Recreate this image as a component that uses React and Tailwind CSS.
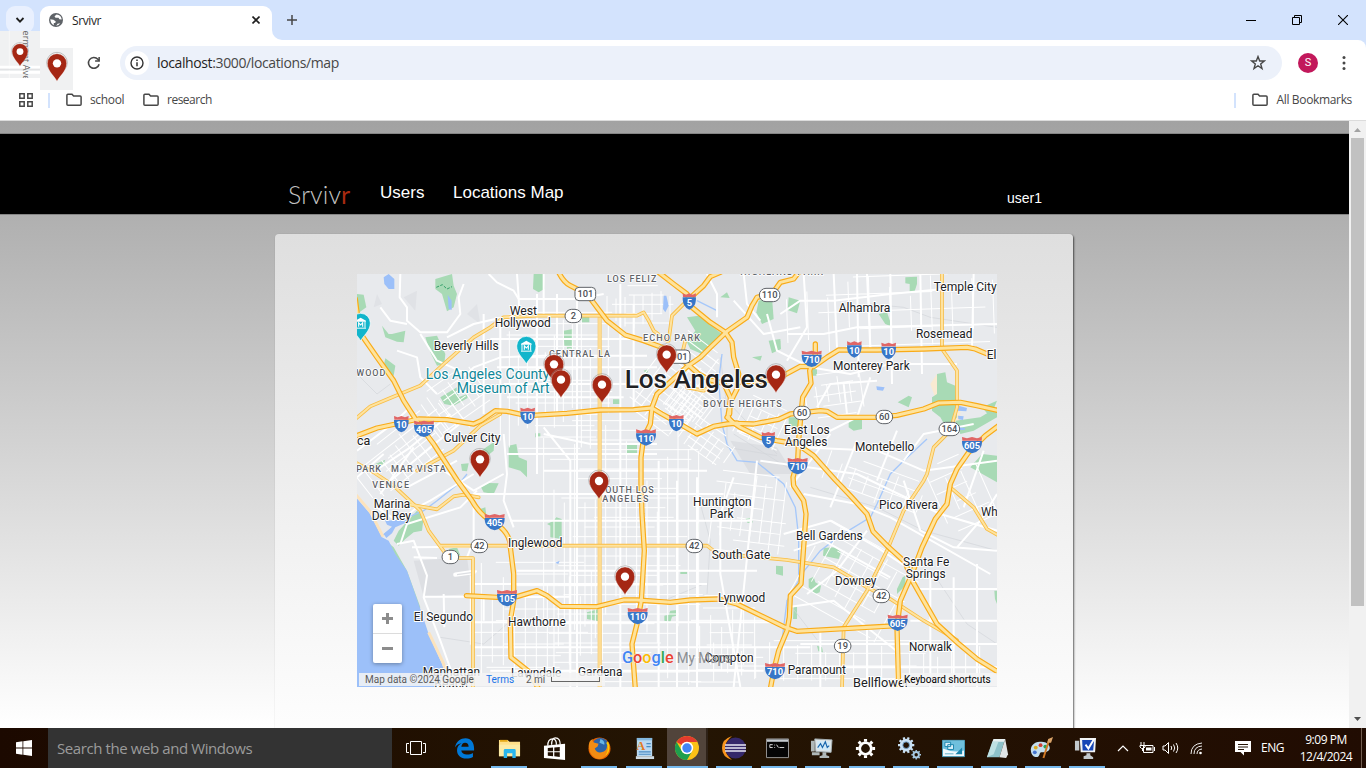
import React from "react";

/* ---------- Map data (map units: 3 per pixel) ---------- */

const HIGHWAYS = [
  "M-5 75L2 130L15 185L60 250L110 320L140 380L185 450L230 510L300 618L345 680Q370 725 410 745Q460 775 460 820L470 900L470 980L460 1040L462 1150L515 1192L545 1245",
  "M-5 487L60 462L130 447L185 435L270 437L350 450L372 440L415 410L450 412L510 425L630 418L730 408L830 407L885 402L915 420L960 445L1020 480L1070 457L1110 450L1140 447",
  "M1110 430L1130 448L1190 450L1265 436L1300 420L1390 410L1410 412L1440 430L1560 430L1620 424L1700 405L1745 387L1810 385L1860 395L1925 410",
  "M905 -5L950 30L990 60L1005 100L1060 145L1105 175L1125 205L1130 250L1145 300L1140 345L1120 385L1113 425Q1115 440 1150 460L1210 490L1260 500L1320 510L1370 545L1410 590L1435 618L1480 665L1530 720L1548 772L1590 815L1645 865L1660 910L1700 980L1740 1050L1800 1105L1860 1155L1925 1195",
  "M605 -5Q620 25 640 35L690 60L720 100L750 140L805 183L860 200L920 222L965 248L993 272L1025 300L1060 318L1100 328L1120 370L1118 420",
  "M1325 -5L1310 15L1270 25L1245 60L1200 70L1185 95L1170 130L1110 172L1060 220L1030 250L990 278L955 310L900 360L885 400L880 450L860 490L852 550L852 630L855 720L862 830L853 980L840 1050L825 1110L835 1245",
  "M1145 325L1200 322L1260 315L1330 277L1370 278L1410 250L1445 228L1560 228L1700 225L1830 220L1855 225L1895 242",
  "M1375 210L1375 240L1358 290L1362 328L1337 370L1332 420L1325 500L1322 560L1308 610L1310 635L1340 680L1347 720L1332 930L1300 965L1297 1030L1290 1070L1265 1130L1250 1190L1240 1245",
  "M1925 455L1885 485L1835 535L1800 585L1780 630L1770 690L1735 735L1695 820L1665 900L1630 980L1620 1060L1625 1245",
  "M328 965L420 970L480 968L540 950L570 965L612 997L720 998L800 978L840 978L940 985L1000 978L1085 975L1140 990L1280 1058L1320 1072L1460 1064L1620 1055",
  "M1090 -5L1060 8L1040 35L990 80",
];

const SECONDARY = [
  "M-5 435L40 397L100 372L190 335L260 270L350 190L400 160L440 130L540 125L840 125L860 115L875 140L890 170L930 200",
  "M935 200L945 125L1000 70",
  "M985 200L975 240L1000 270",
  "M180 590L290 530L370 455L430 420",
  "M-5 565L50 595L110 635L190 710L215 770L265 838L300 852L348 852L348 1245",
  "M150 690L240 706L290 667L320 662L365 670",
  "M250 815L1050 815L1080 838L1290 858L1430 880L1490 915L1530 940L1600 975L1700 1040L1800 1098",
  "M1755 -5L1755 225L1800 290L1800 400L1780 470L1730 520L1710 600L1700 620L1640 710L1590 830L1530 950L1460 1060L1455 1245",
  "M1780 640L1850 700L1890 765L1925 785",
  "M990 340L1040 350L1080 320",
];

const WIDE_STREETS = ["M728 130L728 1245"];

const MAIN_STREETS = [
  "M130 0L128 70L150 100L150 140L190 175L270 175L310 120L305 70L320 30",
  "M70 100L100 140L150 150M190 180L240 260L330 300L350 280L430 250L560 245L700 245L870 245",
  "M120 230L180 250L190 310L240 360M270 190L350 150L480 120M480 0L485 70L487 130",
  "M395 0L420 25L470 50L485 75L660 75L740 60M380 120L380 420M430 130L430 410M540 60L540 600",
  "M560 0L560 120M600 60L600 420M660 70L660 1239M790 30L790 1239M830 90L830 400",
  "M420 280L900 280M440 330L860 330M450 370L800 370M400 195L900 195",
  "M440 480L450 600L440 680L470 760M450 540L900 540M560 480L700 510L900 510M560 460L640 560L640 1239",
  "M560 590L1050 590M350 660L1100 660M460 740L1180 740M480 890L1200 890M350 930L1050 930M350 1045L1260 1045M350 1120L1360 1120M400 1190L1220 1190",
  "M905 560L905 1239M960 620L960 1239M1020 610L1020 1239M1130 610L1090 720L1090 900L1150 1239M1200 560L1130 1239",
  "M120 810L170 800L210 905L200 970L250 1100L300 1239M165 820L360 818M170 850L240 852M200 968L640 968",
  "M295 902L360 892M260 960L262 1060M330 850L350 800L350 660M380 960L380 1040",
  "M120 750L180 700L220 680L350 600M130 810L150 750L310 700L360 650M60 700L120 740M70 660L170 520",
  "M0 530L100 455L160 400M40 600L160 520L280 420M0 610L80 540M100 620L220 520L320 440M150 640L300 560M230 570L350 650L440 600",
  "M1050 0L1080 60L1080 130M1230 120L1260 230L1340 270M1130 80L1220 180L1330 160M1160 0L1170 90L1210 140",
  "M1270 120L1330 80L1430 80L1600 60L1920 30M1290 180L1400 180L1500 160L1920 150M1340 0L1350 160L1290 260",
  "M1430 0L1440 220M1530 0L1540 225M1600 0L1605 330M1690 0L1695 300M1850 0L1845 220M1500 0L1505 310",
  "M1360 280L1480 300L1600 270L1800 270M1380 400L1420 330L1560 320M1460 330L1470 420M1540 310L1500 430L1400 480",
  "M1140 470L1330 520L1560 530L1700 590L1920 560M1210 560L1500 600L1750 720L1920 770M1340 660L1500 690L1600 730L1900 900",
  "M1280 780L1420 740L1560 820L1680 900M1310 830L1400 800L1600 910M1350 960L1440 890L1530 770M1290 1000L1430 980L1630 1140",
  "M1640 620L1690 770L1790 820L1920 830M1800 820L1870 740L1920 660M1720 900L1720 1239M1790 910L1790 1239M1860 870L1860 1239",
  "M1660 1040L1920 1040M1680 945L1920 945M1330 1110L1920 1110M1340 1180L1920 1180M1390 1070L1390 1239M1530 1060L1530 1239",
  "M1420 480L1300 640M1500 500L1420 700M1620 470L1560 620M1640 560L1700 480L1850 450M1880 530L1820 700",
];

const RAILS = [
  "M0 300L60 360L100 330M1090 250L1110 400L1110 520L1260 545M1100 370L1260 540M1130 480L1290 580",
  "M1540 90L1640 100L1720 130L1920 160M1030 690L1060 800L1050 960M920 980L1040 930",
  "M1360 640L1560 700L1700 770L1920 830M1730 900L1830 1050L1920 1110M1290 980L1390 1110M250 1090L380 1110L450 1050",
];

/* Street patches: centre x, centre y, width, height, angle, step x, step y */
const PATCHES = [
  [800, 840, 480, 800, 0, 31, 29],
  [600, 330, 340, 430, 0, 27, 34],
  [540, 1050, 400, 370, 0, 33, 35],
  [170, 520, 380, 150, -38, 30, 27],
  [300, 380, 190, 150, -35, 26, 26],
  [955, 335, 190, 310, 37, 25, 24],
  [1000, 400, 130, 130, 37, 12, 14],
  [1040, 500, 190, 100, 35, 26, 22],
  [850, 100, 200, 130, 0, 27, 28],
  [1600, 120, 620, 230, -2, 62, 52],
  [1220, 450, 150, 130, 25, 26, 30],
  [1440, 360, 190, 130, -8, 34, 32],
  [1180, 730, 230, 260, 7, 30, 34],
  [1500, 930, 330, 260, 29, 42, 36],
  [1560, 640, 330, 120, 20, 43, 31],
  [1480, 1170, 820, 140, 0, 42, 38],
  [1110, 1100, 230, 270, 0, 33, 37],
  [1820, 660, 160, 230, -24, 50, 42],
];

const PARKS = [
  "M235 15L285 0L290 35L300 60L290 100L270 112L255 60L235 45Z",
  "M530 0L560 0L562 45L545 55L528 45Z",
  "M0 60L20 62L28 100L0 120Z",
  "M75 155L95 180L105 180L145 170L140 205L120 203L85 190Z",
  "M205 190L240 185L265 240L262 270L240 275L220 235Z",
  "M85 253L115 275L110 305L78 285Z",
  "M250 370L300 340L305 370L330 360L332 372L290 395L262 390Z",
  "M455 515L478 510L485 550L510 560L510 610L490 590L455 580Z",
  "M312 570L335 568L330 592L315 590Z M350 545L412 503L410 530L360 570Z",
  "M620 170L648 165L645 225L622 215Z M630 190L647 195L645 220L630 225Z",
  "M990 130L1025 125L1095 180L1080 210L1060 215L1035 240L1000 225L990 205L1015 170Z",
  "M1205 80L1245 70L1250 135L1215 150L1198 115Z",
  "M1090 70L1110 55L1118 72Z M1235 200L1270 195L1272 225L1245 238Z M1185 250L1215 245L1210 260Z",
  "M1295 70L1330 80L1320 118L1292 108Z M1645 10L1680 8L1680 30L1672 55L1658 55L1658 30L1645 28Z",
  "M1565 120L1590 115L1605 158L1585 150Z M1260 205L1270 200L1268 225L1260 230Z",
  "M1363 280L1380 280L1380 305L1363 305Z M1475 435L1515 435L1515 465L1490 470L1475 460Z",
  "M1622 385L1655 365L1665 370L1655 400Z M1295 430L1330 430L1325 465L1295 455Z",
  "M1740 300L1765 295L1770 325L1795 335L1800 430L1770 465L1750 430L1725 410L1725 370L1740 360Z",
  "M1795 440L1870 430L1920 400L1920 430L1850 470L1810 480Z M1875 540L1920 545L1920 625L1840 580Z M1875 400L1920 380L1900 430Z",
  "M808 512L840 510L840 543L808 543Z M768 376L790 376L790 390L768 390Z M672 130L697 128L697 145L672 145Z",
  "M590 740L598 730L614 735L614 795L580 790L580 755L570 750Z M372 640L395 627L425 628L410 660L380 655Z",
  "M110 800L125 770L180 710L200 730L195 770L170 775L145 795L125 815Z M370 705L385 700L388 725L375 722Z M275 825L300 820L310 845L285 838Z",
  "M92 805L110 820L150 890L190 1000L183 1010L140 890L110 835Z",
  "M690 1015L725 1005L725 1042L690 1035Z M922 1025L935 1022L940 1010L960 1008L958 1025L945 1028L940 1044L922 1040Z",
  "M1017 750L1025 748L1025 775L1017 775Z M1165 733L1180 732L1188 745L1172 747Z M970 893L990 893L990 900L970 900Z",
  "M1257 875L1278 877L1278 905L1257 900Z M1400 822L1435 820L1452 835L1445 855L1420 850L1398 845Z",
  "M1355 915L1370 908L1375 925L1392 935L1388 955L1375 960L1355 940Z M1637 910L1645 905L1645 935L1620 960L1620 945Z",
  "M1310 997L1320 995L1320 1035L1308 1035Z M1380 1115L1395 1120L1398 1135L1384 1132Z M1912 950L1920 950L1920 990L1914 975Z",
  "M535 478L550 478L550 490L535 490Z M55 570L85 557L80 570L60 580Z M860 290L875 285L870 300Z",
];

const SHORE = "M-5 668L40 720L75 790L95 800L115 840L150 890L185 990L215 1080L255 1170L280 1245L-5 1245Z";

const WATER = [
  SHORE,
  "M80 10L95 0L112 15L112 45L95 45L82 30Z M272 62L284 80L284 108L275 105Z",
  "M920 65L928 65L935 95L925 115L918 105Z M1558 337L1583 340L1578 350L1560 348Z",
  "M1805 395L1830 402L1828 412L1802 410Z M1803 425L1820 427L1818 438L1804 436Z M1802 460L1825 462L1822 468L1806 468Z",
  "M75 720L90 718L92 740L118 738L118 710L128 712L128 735L150 732L150 745L115 760L105 778L88 792L80 780L105 758L90 752Z",
  "M595 866L608 860L604 870Z",
];

const RIVERS = [
  "M70 790L140 735L200 710L240 680L310 625L330 600",
  "M1020 80L1080 110M1095 240L1085 320L1095 450L1110 510L1140 560L1200 565L1280 630L1315 700L1325 790L1325 920L1290 980L1275 1100L1240 1200",
  "M1710 495L1640 560L1600 600L1560 690L1540 730L1450 785L1390 830L1330 905",
];

const LABELS = [
  ["West", 460, 540, 123], ["Hollywood", 415, 581, 159], ["Beverly Hills", 232, 425, 229],
  ["Culver City", 262, 430, 504], ["ca", 2, 40, 514], ["Marina", 52, 160, 702], ["Del Rey", 46, 162, 738],
  ["Inglewood", 455, 616, 820], ["El Segundo", 172, 348, 1041], ["Hawthorne", 455, 626, 1056],
  ["Manhattan", 199, 369, 1205], ["Beach", 234, 333, 1241], ["Lawndale", 464, 613, 1208],
  ["Huntington", 1010, 1184, 697], ["Park", 1060, 1130, 733], ["South Gate", 1066, 1240, 855],
  ["Lynwood", 1085, 1225, 984], ["Compton", 1045, 1190, 1164], ["Gardena", 665, 796, 1206],
  ["Temple City", 1732, 1919, 51], ["Alhambra", 1447, 1600, 114], ["Rosemead", 1679, 1846, 191],
  ["El", 1891, 1918, 255], ["Monterey Park", 1430, 1658, 287], ["East Los", 1283, 1418, 480],
  ["Angeles", 1286, 1411, 516], ["Montebello", 1496, 1672, 530], ["Pico Rivera", 1568, 1743, 705],
  ["Wh", 1874, 1922, 726], ["Bell Gardens", 1319, 1517, 799], ["Santa Fe", 1640, 1777, 876],
  ["Springs", 1648, 1766, 912], ["Downey", 1436, 1558, 934], ["Norwalk", 1658, 1785, 1132],
  ["Paramount", 1294, 1467, 1201], ["Bellflower", 1490, 1656, 1239],
];

const AREA_LABELS = [
  ["WOOD", 0, 83, 305], ["PARK", 0, 70, 594], ["MAR VISTA", 104, 264, 594], ["VENICE", 48, 154, 643],
  ["LOS FELIZ", 752, 896, 24], ["ECHO PARK", 860, 1027, 200], ["CENTRAL LA", 578, 757, 248],
  ["BOYLE HEIGHTS", 1040, 1272, 398], ["HIGHLAND PARK", 1152, 1396, 4],
  ["SOUTH LOS", 728, 888, 656], ["ANGELES", 738, 872, 684],
];

const ROUTES = [
  ["101", 685, 60], ["2", 649, 126], ["110", 1238, 63], ["101", 968, 248], ["60", 1335, 417], ["60", 1582, 429],
  ["164", 1777, 465], ["42", 367, 816], ["1", 280, 849], ["42", 1012, 816], ["42", 1573, 966], ["19", 1457, 1116],
];

const INTERSTATES = [
  ["10", 133, 450], ["405", 201, 464], ["10", 512, 425], ["5", 997, 82], ["10", 958, 447], ["110", 867, 490],
  ["5", 1234, 498], ["10", 1492, 226], ["10", 1595, 230], ["710", 1364, 254], ["710", 1322, 576],
  ["605", 1845, 513], ["405", 413, 744], ["105", 450, 972], ["110", 842, 1026], ["710", 1254, 1191], ["605", 1622, 1046],
];

const PINS = [[591, 325], [612, 371], [735, 386], [929, 296], [1257, 356], [369, 610], [726, 675], [804, 962]];

const PIN_PATH = "M0 0C-6 -14 -29 -30 -29 -54A29 29 0 0 1 29 -54C29 -30 6 -14 0 0Z";

function patchPath([, , w, h, , sx, sy], seed) {
  let s = seed * 7919 + 13;
  const rnd = () => {
    s = (s * 16807) % 2147483647;
    return s / 2147483647;
  };
  let d = "";
  for (let x = -w / 2; x <= w / 2; x += sx) {
    const a = rnd() * h * 0.35;
    const b = rnd() * h * 0.35;
    d += `M${x} ${-h / 2 + a}L${x} ${h / 2 - b}`;
  }
  for (let y = -h / 2; y <= h / 2; y += sy) {
    const a = rnd() * w * 0.35;
    const b = rnd() * w * 0.35;
    d += `M${-w / 2 + a} ${y}L${w / 2 - b} ${y}`;
  }
  return d;
}

function Pin({ x, y, scale = 1 }) {
  return (
    <g transform={`translate(${x} ${y}) scale(${scale})`}>
      <circle cy="-56" r="31" fill="none" stroke="#8a8a8a" strokeWidth="1.5" />
      <path d={PIN_PATH} fill="#a52714" stroke="#fff" strokeWidth="1" />
      <circle cy="-54" r="12.5" fill="#fff" />
    </g>
  );
}

function MuseumPin({ x, y }) {
  return (
    <g transform={`translate(${x} ${y})`}>
      <path d={PIN_PATH} fill="#12b5cb" stroke="#fff" strokeWidth="2" />
      <path d="M-16 -61L0 -70L16 -61V-58H-16Z" fill="#fff" />
      <path d="M-13 -58V-40M13 -58V-40M-16 -38.5H16" stroke="#fff" strokeWidth="3" />
      <path d="M-6 -43V-55L0 -48L6 -55V-43" fill="none" stroke="#fff" strokeWidth="3.4" />
    </g>
  );
}

function Interstate({ label, x, y }) {
  const w = label.length > 2 ? 30 : label.length > 1 ? 22 : 20;
  return (
    <g transform={`translate(${x} ${y})`}>
      <path
        d={`M${-w} -12H${w}Q${w} 5 ${w * 0.76} 12Q${w * 0.5} 22 0 25Q${-w * 0.5} 22 ${-w * 0.76} 12Q${-w} 5 ${-w} -12Z`}
        fill="#3776c8"
      />
      <path d={`M${-w + 1} -13L${-w} -24L${-w * 0.5} -20L0 -24L${w * 0.5} -20L${w} -24L${w - 1} -13Z`} fill="#e06666" />
      <text y="13" textAnchor="middle" fontSize="28" fontWeight="700" fill="#fff">{label}</text>
    </g>
  );
}

function Route({ label, x, y }) {
  const w = label.length > 2 ? 31 : 25;
  return (
    <g transform={`translate(${x} ${y})`}>
      <rect x={-w} y="-20" width={w * 2} height="40" rx={label === "101" ? 12 : 20} fill="#fff" stroke="#5f6368" strokeWidth="3" />
      <text y="10" textAnchor="middle" fontSize="28" fontWeight="500" fill="#4d5156">{label}</text>
    </g>
  );
}

function MapDrawing() {
  return (
    <svg viewBox="0 0 1920 1239" className="block h-[413px] w-[640px] font-[Roboto,sans-serif]">
      <rect width="1920" height="1239" fill="#e8eaed" />
      <path d="M170 860L330 850L345 960L200 968ZM1120 500L1260 520L1310 600L1180 600Z" fill="#dddfe3" />
      <path d="M140 70L180 50L175 110ZM330 120L360 90L370 150ZM60 60L75 90L50 100Z" fill="#e0e2e6" />
      <path d="M1720 330L1740 300L1810 370L1810 440L1770 470ZM1630 960L1610 1020L1645 1010Z" fill="#f9ead2" />
      {PARKS.map((d, i) => <path key={i} d={d} fill="#a8dab5" />)}
      <path d="M238 40L256 32L270 45L285 38" fill="none" stroke="#34a06a" strokeWidth="3" strokeDasharray="9 4" />
      <g fill="none" stroke="#d2d5d9" strokeWidth="2">
        {RAILS.map((d, i) => <path key={i} d={d} />)}
      </g>
      <g fill="none" stroke="#a6c8fa" strokeWidth="4">
        {RIVERS.map((d, i) => <path key={i} d={d} />)}
      </g>
      <g fill="none" stroke="#fff" strokeWidth="3">
        {PATCHES.map((p, i) => (
          <path key={i} d={patchPath(p, i + 3)} transform={`translate(${p[0]} ${p[1]}) rotate(${p[4]})`} />
        ))}
      </g>
      <g fill="none" stroke="#fff" strokeWidth="6" strokeLinejoin="round">
        {MAIN_STREETS.map((d, i) => <path key={i} d={d} />)}
      </g>
      <path d="M295 902L350 894" stroke="#fff" strokeWidth="13" strokeLinecap="round" />
      <path d="M300 902L342 896" stroke="#dddfe3" strokeWidth="4" />
      {WATER.map((d, i) => <path key={i} d={d} fill="#9cc0f9" />)}
      <path d="M-5 660L40 713L78 788M215 1075L258 1165L285 1245" fill="none" stroke="#fce3bd" strokeWidth="9" />
      <g fill="none" stroke="#f6c767" strokeWidth="12">
        {WIDE_STREETS.map((d, i) => <path key={i} d={d} />)}
      </g>
      <g fill="none" stroke="#fddc92" strokeWidth="9">
        {WIDE_STREETS.map((d, i) => <path key={i} d={d} />)}
      </g>
      <g fill="none" strokeLinejoin="round" strokeLinecap="round">
        {SECONDARY.map((d, i) => <path key={i} d={d} stroke="#f8bd45" strokeWidth="11" />)}
        {SECONDARY.map((d, i) => <path key={i} d={d} stroke="#fee3a0" strokeWidth="6" />)}
        {HIGHWAYS.map((d, i) => <path key={i} d={d} stroke="#f9ab18" strokeWidth="16" />)}
        {HIGHWAYS.map((d, i) => <path key={i} d={d} stroke="#fee39c" strokeWidth="9" />)}
      </g>
      {INTERSTATES.map(([t, x, y]) => <Interstate key={`${x}-${y}`} label={t} x={x} y={y} />)}
      {ROUTES.map(([t, x, y]) => <Route key={`${x}-${y}`} label={t} x={x} y={y} />)}
      <g fontSize="37" fill="#202124" stroke="#fff" strokeWidth="6" strokeLinejoin="round" paintOrder="stroke">
        {LABELS.map(([t, x0, x1, y]) => (
          <text key={t + x0} x={x0 - 2} y={y} textLength={x1 - x0 + 2} lengthAdjust="spacingAndGlyphs">{t}</text>
        ))}
      </g>
      <g fontSize="27" fontWeight="500" fill="#5f6368" stroke="#fff" strokeWidth="5" strokeLinejoin="round" paintOrder="stroke">
        {AREA_LABELS.map(([t, x0, x1, y]) => (
          <text key={t + x0} x={x0 - 2} y={y} textLength={x1 - x0 + 4}>{t}</text>
        ))}
      </g>
      <g fontSize="42" fill="#108798" stroke="#fff" strokeWidth="6" strokeLinejoin="round" paintOrder="stroke">
        <text x="206" y="316" textLength="371" lengthAdjust="spacingAndGlyphs">Los Angeles County</text>
        <text x="299" y="358" textLength="279" lengthAdjust="spacingAndGlyphs">Museum of Art</text>
      </g>
      <text x="803" y="341" textLength="430" lengthAdjust="spacingAndGlyphs" fontSize="79" fontWeight="500" fill="#202124" stroke="#fff" strokeWidth="6" paintOrder="stroke">Los Angeles</text>
      <MuseumPin x={508} y={270} />
      <MuseumPin x={11} y={201} />
      {PINS.map(([x, y]) => <Pin key={x} x={x} y={y} />)}
      <g fontSize="47" fontWeight="500" stroke="#fff" strokeWidth="2" paintOrder="stroke">
        <text x="795" y="1167" textLength="155" lengthAdjust="spacingAndGlyphs">
          <tspan fill="#4285f4">G</tspan><tspan fill="#ea4335">o</tspan><tspan fill="#fbbc05">o</tspan>
          <tspan fill="#4285f4">g</tspan><tspan fill="#34a853">l</tspan><tspan fill="#ea4335">e</tspan>
        </text>
        <text x="959" y="1167" textLength="166" lengthAdjust="spacingAndGlyphs" fontSize="44" fontWeight="400" fill="#8b8e92" stroke="none">My Maps</text>
      </g>
    </svg>
  );
}

function MapView() {
  return (
    <div className="relative h-[413px] w-[640px] overflow-hidden font-[Roboto,sans-serif]">
      <MapDrawing />
      <div className="absolute left-4 top-[330px] flex h-[59px] w-[29px] flex-col items-center rounded-[2px] bg-white shadow-[0_1px_4px_rgba(0,0,0,.35)]">
        <svg viewBox="0 0 29 59" className="h-[59px] w-[29px]">
          <path d="M9 14.5H20M14.5 9V20M9 44.5H20" stroke="#8c8c8c" strokeWidth="3" />
          <path d="M0 29.5H29" stroke="#dcdcdc" />
        </svg>
      </div>
      <div className="absolute left-[2px] top-[399px] flex h-[13px] w-[246px] items-center bg-[#f5f5f5]/85 pl-[6px] text-[10px] leading-[13px] text-[#5b5b5b]">
        <span className="w-[121px] whitespace-nowrap">Map data ©2024 Google</span>
        <span className="w-[40px] text-[#1a73e8]">Terms</span>
        <span className="w-[25px]">2 mi</span>
        <span className="h-[5px] w-[49px] border-x border-b border-[#666]" />
      </div>
      <div className="absolute right-0 top-[399px] flex h-[13px] w-[95px] items-center bg-[#f5f5f5]/80 pl-[2px] text-[10px] leading-[13px] text-black">
        <span className="whitespace-nowrap">Keyboard shortcuts</span>
      </div>
    </div>
  );
}

/* ---------- Browser chrome ---------- */

function Folder() {
  return (
    <svg viewBox="0 0 16 14" className="h-[14px] w-4">
      <path d="M.9 2.2Q.9 1.2 1.9 1.2H6L7.6 3H14.1Q15.1 3 15.1 4V11.3Q15.1 12.3 14.1 12.3H1.9Q.9 12.3 .9 11.3Z" fill="none" stroke="#474747" strokeWidth="1.5" />
    </svg>
  );
}

function TabStrip() {
  return (
    <div className="flex h-10 items-start bg-[#d3e3fd]">
      <div className="ml-[6px] mt-[6px] flex h-[27px] w-7 items-center justify-center rounded-[9px] bg-[#e9f0fe]">
        <svg viewBox="0 0 10 10" className="h-[10px] w-[10px]"><path d="M1.5 3L5 6.6L8.5 3" fill="none" stroke="#1f1f1f" strokeWidth="1.8" /></svg>
      </div>
      <div className="ml-[6px] mt-[6px] flex h-[34px] w-[232px] items-center rounded-t-[9px] bg-white pb-[6px] pl-[9px] pr-3">
        <svg viewBox="0 0 14 14" className="h-[14px] w-[14px]">
          <circle cx="7" cy="7" r="7" fill="#5f6368" />
          <path d="M7.6 1.4L5.5 3.2L6.5 4.7H9.5L10.4 6.2L12.7 6.6Q12.5 3.2 9.6 1.9ZM1.3 6.2L4.5 6.8L6.8 8.4L6.2 10H4.8V12.2Q1.6 10.8 1.3 6.2ZM7.2 12.7L8.6 10.7L11.2 10.2Q9.8 12.5 7.2 12.7Z" fill="#fff" />
        </svg>
        <span className="ml-[9px] flex-1 pt-px text-[12px] tracking-[-0.4px] text-[#1f1f1f]">Srvivr</span>
        <svg viewBox="0 0 8 8" className="h-2 w-2"><path d="M.5 .5L7.5 7.5M7.5 .5L.5 7.5" stroke="#1f1f1f" strokeWidth="1.6" /></svg>
      </div>
      <div className="h-10 w-[10px] bg-white"><div className="h-10 w-[10px] rounded-bl-[10px] bg-[#d3e3fd]" /></div>
      <svg viewBox="0 0 10 10" className="ml-[5px] mt-[15px] h-[10px] w-[10px]"><path d="M5 0V10M0 5H10" stroke="#474747" strokeWidth="1.5" /></svg>
      <div className="ml-auto mr-[18px] mt-[15px] flex gap-[36px]">
        <svg viewBox="0 0 10 10" className="h-[10px] w-[10px]"><path d="M0 5.5H10" stroke="#000" /></svg>
        <svg viewBox="0 0 10 10" className="h-[10px] w-[10px]"><path d="M.5 2.5H7.5V9.5H.5ZM2.5 2.5V.5H9.5V7.5H7.5" fill="none" stroke="#000" /></svg>
        <svg viewBox="0 0 10 10" className="h-[10px] w-[10px]"><path d="M0 0L10 10M10 0L0 10" stroke="#000" strokeWidth="1.1" /></svg>
      </div>
    </div>
  );
}

function AddressBar() {
  return (
    <div className="bg-[#d3e3fd]">
      <div className="flex h-[46px] items-center rounded-tr-[8px] bg-white pl-[87px]">
        <svg viewBox="0 0 14 14" className="h-[14px] w-[14px]">
          <path d="M12.1 8.2A5.4 5.4 0 1 1 10.9 3.3L12 4.5" fill="none" stroke="#474747" strokeWidth="1.6" />
          <path d="M12.9 .9V5.7H8.1V4.2H11.4V.9Z" fill="#474747" />
        </svg>
        <div className="ml-[19px] flex h-[34px] w-[1162px] items-center rounded-full bg-[#ecf1fa] pl-[5px] pr-[16px]">
          <div className="flex h-6 w-6 items-center justify-center rounded-full bg-white">
            <svg viewBox="0 0 14 14" className="h-[14px] w-[14px]">
              <circle cx="7" cy="7" r="6" fill="none" stroke="#333" strokeWidth="1.4" />
              <path d="M7 6.2V10.3M7 3.6V5" stroke="#333" strokeWidth="1.5" />
            </svg>
          </div>
          <span className="ml-2 flex-1 pb-px text-[14px] tracking-[-0.38px] text-[#474747]"><span className="text-[#1f1f1f]">localhost</span>:3000/locations/map</span>
          <svg viewBox="0 0 16 16" className="h-4 w-4"><path d="M8 1.6L9.7 6H14.3L10.7 8.9L12 13.6L8 10.8L4 13.6L5.3 8.9L1.7 6H6.3Z" fill="none" stroke="#474747" strokeWidth="1.4" /></svg>
        </div>
        <div className="ml-4 flex h-5 w-5 items-center justify-center rounded-full bg-[#c2185b] font-[Roboto,sans-serif] text-[11px] text-white">S</div>
        <svg viewBox="0 0 4 14" className="ml-6 h-[14px] w-1"><circle cx="2" cy="1.6" r="1.5" fill="#474747" /><circle cx="2" cy="7" r="1.5" fill="#474747" /><circle cx="2" cy="12.4" r="1.5" fill="#474747" /></svg>
      </div>
    </div>
  );
}

function BookmarksBar() {
  return (
    <div className="flex h-[35px] items-center border-b border-[#dcdcdc] bg-white pb-[6px] pl-[19px] pr-[14px] text-[12px] text-[#474747]">
      <svg viewBox="0 0 14 14" className="h-[14px] w-[14px]"><path d="M.8 .8H5.2V5.2H.8ZM8.8 .8H13.2V5.2H8.8ZM.8 8.8H5.2V13.2H.8ZM8.8 8.8H13.2V13.2H8.8Z" fill="none" stroke="#474747" strokeWidth="1.5" /></svg>
      <div className="ml-[15px] h-[15px] w-[2px] bg-[#d3e3fd]" />
      <div className="ml-4 flex items-center gap-2"><Folder /><span className="w-[35px] tracking-[-0.35px]">school</span></div>
      <div className="ml-[18px] flex items-center gap-2"><Folder /><span className="tracking-[-0.5px]">research</span></div>
      <div className="ml-auto h-[15px] w-[2px] bg-[#d3e3fd]" />
      <div className="ml-4 flex items-center gap-2"><Folder /><span className="whitespace-nowrap tracking-[-0.34px]">All Bookmarks</span></div>
    </div>
  );
}

function DragGhosts() {
  return (
    <>
      <div className="absolute left-0 top-[31px] h-[47px] w-10 overflow-hidden bg-[#f0f1f2]">
        <svg viewBox="0 0 120 141" className="h-[47px] w-10">
          <path d="M28 0V141" stroke="#f7f7f7" strokeWidth="3" />
          <path d="M0 108H120M0 124H120" stroke="#fff" strokeWidth="8" />
          <path d="M0 116H120" stroke="#dfe1e3" strokeWidth="3" />
          <text transform="translate(70 -18) rotate(90)" fontSize="27" textLength="166" fill="#666">Vermont Ave</text>
          <Pin x={60} y={106} scale={0.82} />
        </svg>
      </div>
      <div className="absolute left-10 top-12 h-[42px] w-[33px] bg-[#f0f1f2]">
        <svg viewBox="0 0 99 126" className="h-[42px] w-[33px]"><Pin x={51} y={100} /></svg>
      </div>
    </>
  );
}

/* ---------- Web page ---------- */

function Page() {
  return (
    <div className="flex h-[607px]">
      <div className="w-[1349px] overflow-hidden bg-linear-to-b from-[#a2a2a2] to-white pt-3 font-['Liberation_Sans',sans-serif]">
        <div className="flex h-[82px] items-end border-y border-y-[#858585] bg-black pl-[288px] pr-[307px] text-white">
          <div className="mb-[4px] w-[92px] font-[Lato,sans-serif] text-[25px] font-light leading-[32px] tracking-[0.1px] text-[#c4c4c4]">
            Srviv<span className="font-normal text-[#a82a10]">r</span>
          </div>
          <span className="mb-[11px] w-[73px] text-[17px] leading-5">Users</span>
          <span className="mb-[11px] flex-1 text-[17px] leading-5">Locations Map</span>
          <span className="mb-[6px] text-[14px] leading-5">user1</span>
        </div>
        <div className="ml-[275px] mt-[19px] h-[520px] w-[798px] rounded-[4px] bg-linear-to-b from-[#dfdfdf] to-white pl-[82px] pt-10 shadow-[1px_1px_2px_rgba(0,0,0,.6)]">
          <MapView />
        </div>
      </div>
      <div className="flex w-[17px] flex-col items-center bg-[#f1f1f1]">
        <svg viewBox="0 0 17 17" className="h-[17px] w-[17px]"><path d="M5 11L8.5 7L12 11Z" fill="#a3a3a3" /></svg>
        <div className="h-[468px] w-[13px] bg-[#c1c1c1]" />
        <svg viewBox="0 0 17 17" className="mt-auto h-[17px] w-[17px]"><path d="M5 6L8.5 10L12 6Z" fill="#505050" /></svg>
      </div>
    </div>
  );
}

/* ---------- Taskbar ---------- */

const gearTeeth = (n, r1, r2) =>
  Array.from({ length: n }, (_, i) => {
    const a = (i * 2 * Math.PI) / n;
    return `M${Math.cos(a) * r1} ${Math.sin(a) * r1}L${Math.cos(a) * r2} ${Math.sin(a) * r2}`;
  }).join("");

const ICONS = {
  edge: (
    <path d="M2 11C3.5 4 8 1.2 13 1.2C19 1.2 22 5.8 22 12V14H8.6C9 17 11.5 18.2 14.5 18.2C17 18.2 19 17.6 20.8 16.6V20.8C18.8 22 16.5 22.5 14 22.5C8 22.5 4.2 19 4.2 13.8C4.2 10.6 6 7.8 9 6.6C6 6.8 3.6 8.5 2 11ZM8.7 10.2H16.3C16.3 7.6 15 6 12.6 6C10.4 6 9 7.7 8.7 10.2Z" fill="#0078d7" />
  ),
  explorer: (
    <g><path d="M1 3H10L12 5H23V20H1Z" fill="#ffe08a" /><path d="M2 3H10V5H2Z" fill="#e5a91a" /><path d="M1 8H23V20H1Z" fill="#fceba6" /><path d="M6 22V14Q6 12.5 7.5 12.5H17Q18.5 12.5 18.5 14V22H15V17H9.5V22Z" fill="#28b5ee" /></g>
  ),
  store: (
    <g><path d="M1 9L23 7V24L1 22Z" fill="#fff" /><path d="M5 9Q5 2 10 2Q14 2 14 8M9 8Q9 .8 13 .8Q18 .8 18 8" fill="none" stroke="#fff" strokeWidth="1.3" /><path d="M5 11.5L10.5 11V14.8H5ZM11.8 11L17.5 10.5V14.8H11.8ZM5 16H10.5V20L5 19.6ZM11.8 16H17.5V20.8L11.8 20.2Z" fill="#201003" /></g>
  ),
  firefox: (
    <g><circle cx="12" cy="12" r="11.5" fill="#e66000" /><circle cx="13" cy="9.5" r="8.5" fill="#2c64a8" /><path d="M13 2Q18 4 17 8L12 6Z" fill="#69b7e5" /><path d="M1 11Q0 4 5 2Q4 5 7 6L11 7L10 10L7 12Q9 17 14 16Q20 15 20 8Q23 13 21 17Q17 23 11 23Q2 21 1 11Z" fill="#f28c13" /><path d="M21 5Q25 14 18 20Q23 12 19 6Z" fill="#ffcb00" /></g>
  ),
  wordpad: (
    <g><path d="M4 1H20V20H4Z" fill="#b9d9f0" /><path d="M4 1H20V3.5H4Z" fill="#84b9df" /><path d="M3 20H22V23H3Z" fill="#cfdbe3" /><path d="M14 7H18.5M14 10H18.5M6 15.5H18.5M6 18H18.5" stroke="#4b8cc4" strokeWidth="1.3" /><text x="3.5" y="14" fontSize="13" fontWeight="700" fill="#e37a24" className="font-['Liberation_Serif',serif]">A</text></g>
  ),
  chrome: (
    <g><circle cx="12" cy="12" r="12" fill="#fbc116" /><path d="M12 0A12 12 0 0 1 22.4 6H12A6 6 0 0 0 6.8 9L1.6 6A12 12 0 0 1 12 0Z" fill="#e33b2e" /><path d="M1.6 6A12 12 0 0 0 12 24L17.2 15A6 6 0 0 1 6.8 15Z" fill="#1e9f4e" /><circle cx="12" cy="12" r="6.2" fill="#fff" /><circle cx="12" cy="12" r="4.7" fill="#4285f4" /></g>
  ),
  eclipse: (
    <g><path d="M10 0Q0 3 0 12Q0 21 10 24Q3 18 3 12Q3 6 10 0Z" fill="#f7941e" /><circle cx="13.5" cy="12" r="10.5" fill="#35286a" /><path d="M3 9H24M3 12H24M3 15H24" stroke="#e9e7f3" strokeWidth="1.6" /></g>
  ),
  cmd: (
    <g><path d="M.5 2H23.5V21.5H.5Z" fill="#050505" stroke="#999" /><path d="M1 2.5H23V5H1Z" fill="#c5cbd0" /><path d="M7 8H4V11H7M9 8V8.8M9 10.5V11.3M11 8L13 11M14 11H19" fill="none" stroke="#ddd" strokeWidth="1" /></g>
  ),
  monitor: (
    <g><path d="M5 2L23 3L22 16L6 15Z" fill="#dfe5e7" stroke="#a4b0b4" /><path d="M7.5 4L21 5L20 14L8 13Z" fill="#d0e9f7" /><path d="M8 11L11 7L13 11L16 5L18 11L20 9" fill="none" stroke="#1865ac" strokeWidth="1.2" /><path d="M1 4H5V15H1ZM13 16H17V19L20 20V22H10V20L13 19ZM2 16H10V19H2Z" fill="#b0b8b8" /></g>
  ),
  gear: (
    <g transform="translate(12 12)"><circle r="6" fill="none" stroke="#fff" strokeWidth="2.8" /><path d={gearTeeth(8, 7, 10)} stroke="#fff" strokeWidth="3.3" /></g>
  ),
  gears: (
    <g><g transform="translate(8.5 8.5)"><circle r="5" fill="none" stroke="#c9e1f4" strokeWidth="3.2" /><path d={gearTeeth(10, 6, 8.5)} stroke="#c9e1f4" strokeWidth="2.3" /><circle r="3.5" fill="none" stroke="#6c9dc5" /></g><g transform="translate(19 18.5)"><circle r="2.8" fill="none" stroke="#a7c9e2" strokeWidth="2" /><path d={gearTeeth(8, 3.5, 5)} stroke="#a7c9e2" strokeWidth="1.5" /></g></g>
  ),
  remote: (
    <g><path d="M.5 3.5H23.5V20.5H.5Z" fill="#f0f9fd" stroke="#429ab8" /><path d="M1 4H23V14Q12 17 1 12Z" fill="#6fc0dd" /><path d="M3 5.5H9V10H3ZM6 8H12V13H6Z" fill="#d8f0f9" stroke="#1984ac" /><path d="M14 18L21 11V18Z" fill="#1984ac" /><path d="M3 17.5H12" stroke="#82bfd3" strokeWidth="1.3" /></g>
  ),
  notepad: (
    <g><path d="M8 2H20L14 21H1Z" fill="#8ec2ca" /><path d="M14 21L20 2L23 18L21 22Z" fill="#e1e5e6" /><path d="M8 2H20L19 5H6.5Z" fill="#e8f1f2" /><path d="M6.5 5L1 21L8 18L13 5Z" fill="#bee0e3" /></g>
  ),
  paint: (
    <g><path d="M12 5C5 4 0 9 1 15C2 21 7 22 9 20C11 18 9 16 13 16C19 16 22 13 20 9C18 6 15 5 12 5Z" fill="#c4dff0" /><circle cx="6" cy="11" r="2" fill="#ddac23" /><circle cx="11" cy="8.5" r="2" fill="#ce3f32" /><circle cx="16" cy="10" r="2" fill="#29a152" /><circle cx="5" cy="16" r="2" fill="#4675d0" /><path d="M20 3L14 22" stroke="#d07926" strokeWidth="2" /><path d="M19 2L24 0L22 6L18 6Z" fill="#dba46a" /></g>
  ),
  system: (
    <g><path d="M6 1L23 1L22 16L7 16Z" fill="#f1f3f5" /><path d="M8.5 3H21L20 14H9Z" fill="#1746b6" /><path d="M12 8L15 12L21 2" fill="none" stroke="#fff" strokeWidth="2" /><path d="M1 4H5.5V14H1ZM13 17H17V19L20 21V23H10V20L13 19Z" fill="#c3c9cd" /></g>
  ),
};

const TASKS = [
  ["edge", 0], ["explorer", 1], ["store", 0], ["firefox", 1], ["wordpad", 1], ["chrome", 2], ["eclipse", 1],
  ["cmd", 1], ["monitor", 1], ["gear", 1], ["gears", 1], ["remote", 1], ["notepad", 1], ["paint", 1], ["system", 1],
];

function TaskButton({ name, state, wide }) {
  return (
    <div className={wide ? "flex h-10 w-[45px] flex-col" : "flex h-10 w-11 flex-col"}>
      <div className={state === 2 ? "flex h-[38px] w-[41px] items-center justify-center border-r-2 border-[#2e2218] bg-[#51443b] pt-0.5" : wide ? "flex h-[38px] w-11 items-center justify-center pt-0.5" : "flex h-[38px] w-[41px] items-center justify-center pt-0.5"}>
        <svg viewBox="0 0 24 24" className={name === "chrome" || name === "eclipse" ? "h-6 w-6" : "h-[23px] w-[23px]"}>{ICONS[name]}</svg>
      </div>
      {state > 0 && <div className={state === 2 ? "h-0.5 w-[41px] bg-[#76b9ed]" : "ml-1 h-0.5 w-9 bg-[#76b9ed]"} />}
    </div>
  );
}

function Taskbar() {
  return (
    <div className="flex h-10 items-center bg-linear-to-r from-[#1c0900] via-[#241503] to-[#210c02] text-white">
      <div className="flex h-10 w-12 items-center justify-center">
        <svg viewBox="0 0 16 16" className="h-4 w-4"><path d="M0 2.2L6.5 1.3V7.5H0ZM7.3 1.2L16 0V7.5H7.3ZM0 8.4H6.5V14.7L0 13.8ZM7.3 8.4H16V16L7.3 14.8Z" fill="#fff" /></svg>
      </div>
      <div className="flex h-10 w-[344px] items-center bg-[#333] pl-[9px] pt-px text-[15px] tracking-[-0.41px] text-[#9b9b9b]">Search the web and Windows</div>
      <div className="flex w-[50px] justify-center pr-[2px]">
        <svg viewBox="0 0 20 14" className="h-[14px] w-5"><path d="M4.5 .5H15.5V13.5H4.5ZM3 2.5H.5V11.5H3M17 2.5H19.5V11.5H17" fill="none" stroke="#fff" /></svg>
      </div>
      {TASKS.map(([name, state], i) => <TaskButton key={name} name={name} state={state} wide={i < 7} />)}
      <div className="flex flex-1 items-center pl-2">
        <svg viewBox="0 0 12 8" className="h-2 w-3"><path d="M1 7L6 2L11 7" fill="none" stroke="#fff" strokeWidth="1.2" /></svg>
        <svg viewBox="0 0 16 14" className="ml-[10px] h-[14px] w-4"><path d="M4.5 4.5H14V11.5H4.5ZM15.5 6V10M2 1V4M5 1V4M1 4.5H6V6L4.5 7.5H2.5L1 6ZM3.5 7.5V10" fill="none" stroke="#fff" /><path d="M7 6.5H12.5V9.5H7Z" fill="#fff" /></svg>
        <svg viewBox="0 0 18 14" className="ml-[7px] h-[14px] w-[18px]"><path d="M1 5H3L6.5 1.5V12.5L3 9H1ZM9 5Q10.5 7 9 9M11.5 3.5Q14 7 11.5 10.5M14 2Q17.5 7 14 12" fill="none" stroke="#fff" /></svg>
        <svg viewBox="0 0 14 14" className="ml-[9px] h-[14px] w-[14px]"><circle cx="11.5" cy="12" r="1.3" fill="#fff" /><path d="M8 13Q8 8.5 13 8M5 13Q5 5.5 13 5M2 13Q2 3 13 2" fill="none" stroke="#eee" /></svg>
        <svg viewBox="0 0 16 16" className="ml-[32px] h-4 w-4"><path d="M0 1H16V12H9V15.5L5.5 12H0Z" fill="#fff" /><path d="M3 4.5H13M3 7H13M3 9.5H9" stroke="#251304" /></svg>
        <span className="ml-[10px] w-[24px] text-[12px] tracking-[-0.5px]">ENG</span>
        <div className="ml-[11px] w-[60px] text-center text-[12px] leading-[17px] tracking-[-0.48px]"><div>9:09 PM</div><div>12/4/2024</div></div>
        <div className="ml-auto mr-1 h-10 w-px bg-[#715d50]" />
      </div>
    </div>
  );
}

export default function App() {
  return (
    <div className="relative h-[768px] w-[1366px] overflow-hidden bg-white font-['Open_Sans','Noto_Sans',sans-serif]">
      <TabStrip />
      <AddressBar />
      <BookmarksBar />
      <Page />
      <Taskbar />
      <DragGhosts />
    </div>
  );
}
